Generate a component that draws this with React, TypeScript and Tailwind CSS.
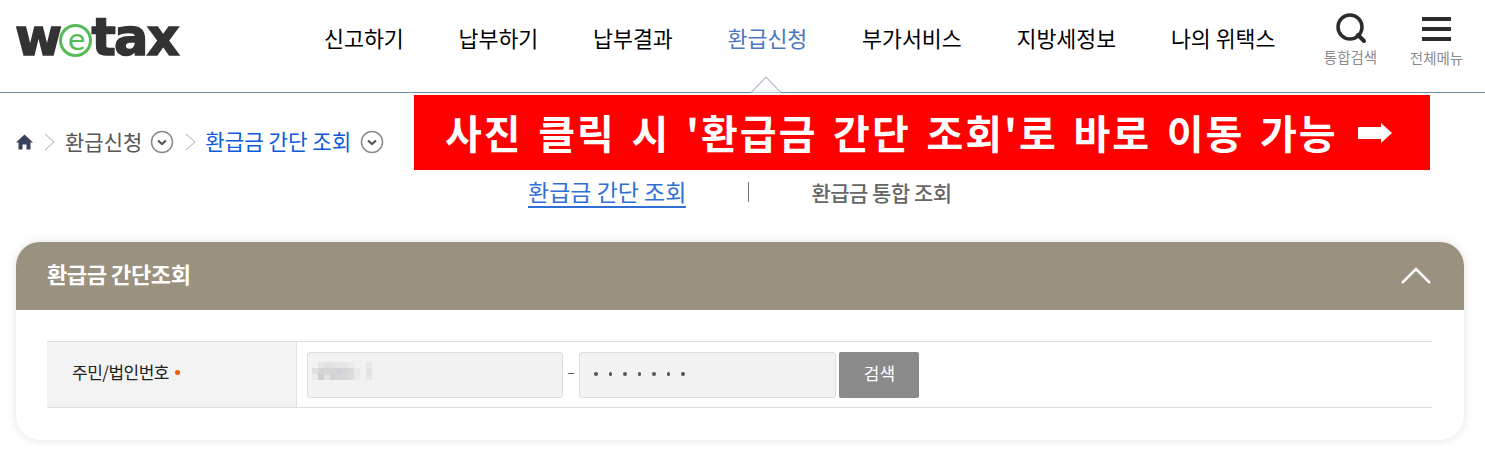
import React from 'react'

const FONT = "font-['Noto_Sans_CJK_KR','Liberation_Sans',sans-serif]"

const navItems = ['신고하기', '납부하기', '납부결과', '환급신청', '부가서비스', '지방세정보', '나의 위택스']

// blurred-out id number, three rows of 6px blocks
const mosaic = [
    ['', '#e5e5e7', '#dfe0e3', '#e3e3e3', '#e8e6e6', '#e6e4e4', '#ecebeb', '', '', '#e9e8e8'],
    ['#e0dedd', '#d6d4d5', '#d5d6d9', '#d5d5d3', '#cdd3d9', '#d5d5d8', '#d9d9d9', '#e9e9e9', '', '#e3e3e5'],
    ['#ece9e7', '#cbced3', '#e2e2e2', '#d5d2d2', '#d8d5d6', '#d6d8dc', '#dcdcdc', '#e9e9e9', '', '#e6e6e8'],
]

const CircleChevron = () => (
    <svg width="24" height="24" viewBox="0 0 24 24" fill="none" aria-hidden="true">
        <circle cx="12" cy="12" r="10.5" stroke="#8a8a8a" strokeWidth="1.5" />
        <path d="M8 10.5l4 3.5 4-3.5" stroke="#555" strokeWidth="2.2" />
    </svg>
)

const Crumb = () => (
    <svg width="11" height="18" viewBox="0 0 11 18" fill="none" aria-hidden="true">
        <path d="M1 1l9 8-9 8" stroke="#aaa" strokeWidth="1" />
    </svg>
)

const Logo = () => (
    <div className="flex items-center font-['DejaVu_Sans',sans-serif] font-bold text-[#333] text-[51px] leading-none tracking-[-1.7px] [-webkit-text-stroke:1.5px_#333]">
        <span>w</span>
        <span className="flex items-center justify-center w-[33px] h-[33px] mt-[6px] -ml-[1px] -mr-[1px] rounded-full border-[3px] border-[#55bb55] bg-white text-[#55bb55] text-[29px] font-normal [-webkit-text-stroke:0]">e</span>
        <span>tax</span>
    </div>
)

export default function App() {
    return (
        <div className={`${FONT} w-[1485px] h-[459px] overflow-hidden bg-white relative`}>
            <header className="h-[93px] border-b border-[#7a88a8] flex relative">
                <div className="w-[324px] pl-[15px] pt-[12px]">
                    <Logo />
                </div>
                <nav className="flex gap-[54.7px] pt-[22px]">
                    {navItems.map((item) => (
                        <a key={item} className={`text-[21.7px] leading-[32px] whitespace-nowrap ${item === '환급신청' ? 'text-[#4a76c4]' : 'text-black'}`}>{item}</a>
                    ))}
                </nav>
                <div className="ml-[47px] w-[56px] flex flex-col items-center pt-[12px]">
                    <svg width="32" height="32" viewBox="0 0 32 32" fill="none" aria-hidden="true">
                        <circle cx="15" cy="15" r="12" stroke="#2b2b2b" strokeWidth="3.5" />
                        <path d="M23 23l6 6" stroke="#2b2b2b" strokeWidth="4" strokeLinecap="round" />
                    </svg>
                    <span className="text-[14.5px] leading-[20px] mt-[3px] text-[#8b8b8b] whitespace-nowrap">통합검색</span>
                </div>
                <div className="ml-[30px] w-[56px] flex flex-col items-center pt-[17px]">
                    <div className="w-[29px] flex flex-col gap-[6px]">
                        <div className="h-[4px] bg-[#2b2b2b]"></div>
                        <div className="h-[4px] bg-[#2b2b2b]"></div>
                        <div className="h-[4px] bg-[#2b2b2b]"></div>
                    </div>
                    <span className="text-[14.5px] leading-[20px] mt-[7px] text-[#8b8b8b] whitespace-nowrap">전체메뉴</span>
                </div>
                {/* little notch above the active menu */}
                <svg className="absolute left-[751px] top-[75px]" width="30" height="18" viewBox="0 0 30 18" fill="none" aria-hidden="true">
                    <path d="M0 17.5 15 2l15 15.5" stroke="#b4bccb" strokeWidth="1.2" fill="white" />
                </svg>
            </header>

            {/* red notice over the page */}
            <div className="absolute left-[414px] top-[95px] w-[1016px] h-[75px] bg-[#ff0000] flex items-center pl-[31px] text-white font-bold text-[40px] tracking-[2px] [word-spacing:4.6px] whitespace-nowrap">
                <span className="pb-[2px]">사진 클릭 시 '환급금 간단 조회'로 바로 이동 가능</span>
                <svg className="ml-[20px]" width="34" height="20" viewBox="0 0 34 20" aria-hidden="true">
                    <path d="M0 4h23V0l11 10-11 10v-4H0z" fill="white" />
                </svg>
            </div>

            <div className="flex items-center h-[24px] mt-[37px] pl-[15px]">
                <svg width="19" height="18" viewBox="0 0 18 18" aria-hidden="true">
                    <path d="M9 1.5 0.5 9.5H3V16.5H7V11.5H11V16.5H15V9.5H17.5z" fill="#37415c" />
                </svg>
                <span className="ml-[10px]"><Crumb /></span>
                <span className="ml-[10px] pb-[3px] text-[21px] leading-[24px] text-[#555]">환급신청</span>
                <span className="ml-[8px]"><CircleChevron /></span>
                <span className="ml-[11px]"><Crumb /></span>
                <span className="ml-[9px] pb-[3px] text-[21.2px] leading-[24px] text-[#0b5bdc]">환급금 간단 조회</span>
                <span className="ml-[9px]"><CircleChevron /></span>
            </div>

            <div className="flex items-center h-[32px] mt-[22px] pl-[528px]">
                <a className="text-[23px] leading-[30px] text-[#2f6fd6] border-b-2 border-[#2f6fd6]">환급금 간단 조회</a>
                <span className="ml-[62px] w-px h-[20px] bg-[#777]"></span>
                <a className="ml-[62px] text-[21px] font-medium leading-[30px] text-[#666] tracking-[-0.5px]">환급금 통합 조회</a>
            </div>

            <section className="mx-[16px] mt-[34px] w-[1448px] h-[198px] rounded-[24px] bg-white shadow-[0_0_10px_rgba(0,0,0,0.12)]">
                <div className="h-[68px] rounded-t-[24px] bg-[#9b917f] flex items-center justify-between pl-[31px] pr-[32px]">
                    <h2 className="pb-[5px] text-white font-bold text-[22px] tracking-[-0.4px]">환급금 간단조회</h2>
                    <svg width="32" height="20" viewBox="0 0 32 20" fill="none" aria-hidden="true">
                        <path d="M2 17 16 3l14 14" stroke="white" strokeWidth="2.5" />
                    </svg>
                </div>
                <div className="mx-[31px] mt-[31px] w-[1385px] h-[67px] border-y border-[#dddddd] flex">
                    <div className="w-[250px] bg-[#f3f3f3] border-r border-[#e3e3e3] flex items-center pl-[25px] pb-[5px] text-[17px] text-[#222] tracking-[-0.5px]">
                        주민/법인번호
                        <span className="ml-[6px] mt-[1px] w-[5px] h-[5px] rounded-full bg-[#f05a00]"></span>
                    </div>
                    <div className="flex items-center pl-[10px]">
                        <div className="w-[256px] h-[46px] rounded-[3px] border border-[#dddddd] bg-[#f2f2f2] flex items-center pl-[4px]">
                            <svg className="mb-[8px]" width="60" height="18" viewBox="0 0 60 18" aria-hidden="true">
                                {mosaic.map((row, y) =>
                                    row.map((color, x) => color && (
                                        <rect key={`${x}-${y}`} x={x * 6} y={y * 6} width="6" height="6" fill={color} />
                                    ))
                                )}
                            </svg>
                        </div>
                        <span className="w-[16px] mb-[7px] text-center text-[#555] text-[14px]">–</span>
                        <div className="w-[257px] h-[46px] rounded-[3px] border border-[#dddddd] bg-[#f2f2f2] flex items-center gap-[11px] pl-[14px]">
                            {[0, 1, 2, 3, 4, 5, 6].map((i) => (
                                <span key={i} className="w-[3.5px] h-[3.5px] mb-[1px] rounded-full bg-[#555]"></span>
                            ))}
                        </div>
                        <button className="ml-[3px] w-[80px] h-[46px] pb-[3px] pl-[1px] rounded-[2px] bg-[#8a8a8a] text-white text-[17px]">검색</button>
                    </div>
                </div>
            </section>
        </div>
    )
}
